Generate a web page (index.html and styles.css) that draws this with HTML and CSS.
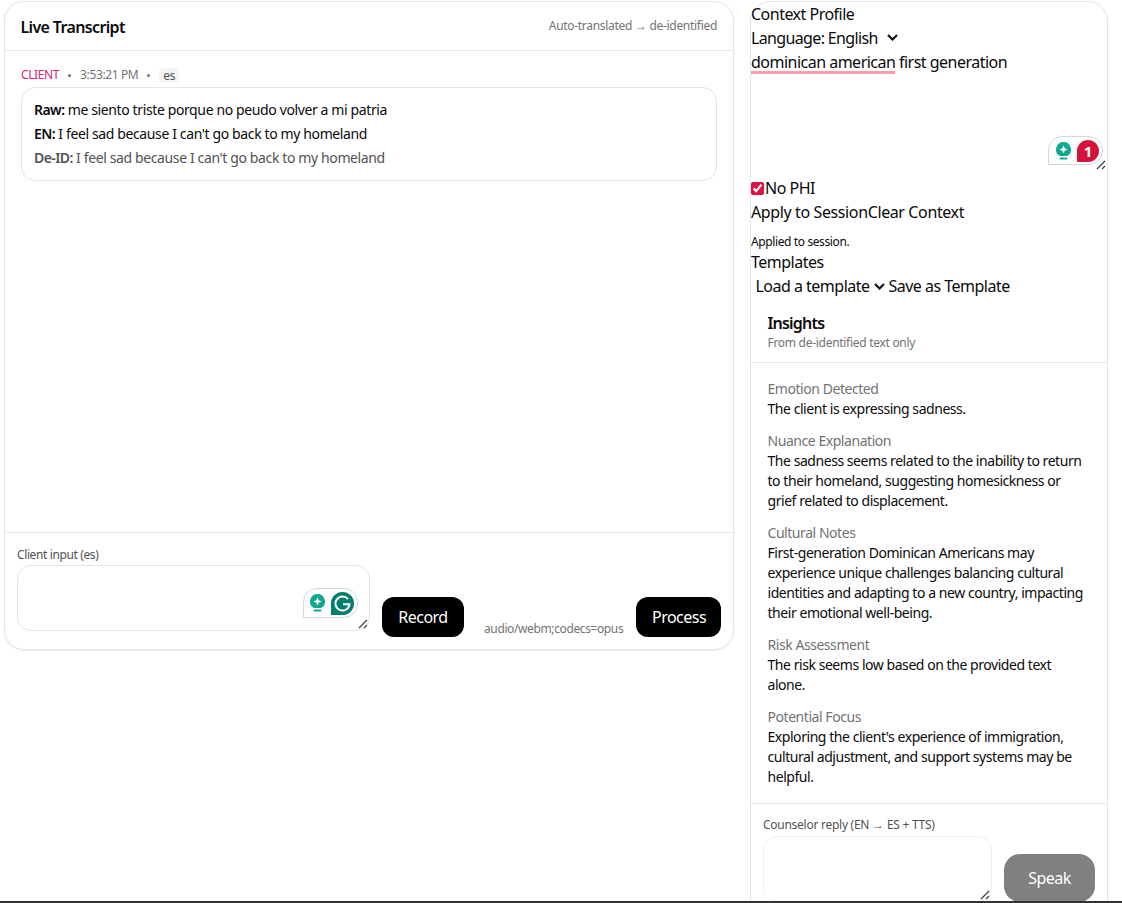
FILE: index.html
```html
<!DOCTYPE html>
<html lang="en">
<head>
<meta charset="utf-8">
<title>Live Transcript</title>
<link rel="stylesheet" href="styles.css">
</head>
<body>
<div class="page">
  <main class="columns">
    <section class="card transcript">
      <header class="card-head">
        <h2>Live Transcript</h2>
        <span class="head-note">Auto-translated <span class="arrow">→</span> de-identified</span>
      </header>
      <div class="messages">
        <div class="meta">
          <span class="who">CLIENT</span><i class="dot"></i><span>3:53:21 PM</span><i class="dot"></i><span class="lang">es</span>
        </div>
        <div class="bubble">
          <p><b>Raw:</b> me siento triste porque no peudo volver a mi patria</p>
          <p><b>EN:</b> I feel sad because I can't go back to my homeland</p>
          <p class="deid"><b>De-ID:</b> I feel sad because I can't go back to my homeland</p>
        </div>
      </div>
      <footer class="composer">
        <div class="field">
          <label class="small-label">Client input (es)</label>
          <div class="box client-box">
            <div class="gram">
              <svg class="bulb" viewBox="0 0 15 18"><path d="M7.500 0a7.500 7.500 0 0 1 3.500 14.100H4A7.500 7.500 0 0 1 7.500 0z" fill="#0fa98f"/><path d="M7.500 3.500 8.700 6.300l2.800 1.200-2.800 1.200-1.200 2.800-1.200-2.800-2.800-1.200 2.800-1.200z" fill="#fff"/><rect x="3.500" y="15.500" width="8" height="2" rx="1" fill="#0fa98f"/></svg>
              <svg class="g-badge" viewBox="0 0 23 23"><path d="M11.500 0a11.500 11.500 0 0 1 0 23H0V11.500A11.500 11.500 0 0 1 11.500 0z" fill="#027e6f"/><path d="M17 7.200a7 7 0 1 0 1.500 5H12" fill="none" stroke="#fff" stroke-width="2"/></svg>
            </div>
            <svg class="grip" viewBox="0 0 10 10"><path d="M9 1 1 9M9 6 6 9" stroke="#444" stroke-width="1.300"/></svg>
          </div>
        </div>
        <button class="btn rec">Record</button>
        <span class="codec">audio/webm;codecs=opus</span>
        <button class="btn proc">Process</button>
      </footer>
    </section>

    <aside class="card side">
      <div class="plain">Context Profile</div>
      <div class="plain select-line"><span class="tight">Language: English</span><svg class="chev lang-chev" viewBox="0 0 11 7"><path d="M1 1l4.500 4.500L10 1" fill="none" stroke="#111" stroke-width="2.200"/></svg></div>
      <div class="context-area"><span class="flag">dominican american</span> first generation<div class="gram red-gram">
          <svg class="bulb" viewBox="0 0 15 18"><path d="M7.500 0a7.500 7.500 0 0 1 3.500 14.100H4A7.500 7.500 0 0 1 7.500 0z" fill="#0fa98f"/><path d="M7.500 3.500 8.700 6.300l2.800 1.200-2.800 1.200-1.200 2.800-1.200-2.800-2.800-1.200 2.800-1.200z" fill="#fff"/><rect x="3.500" y="15.500" width="8" height="2" rx="1" fill="#0fa98f"/></svg>
          <span class="count">1</span>
        </div><svg class="grip" viewBox="0 0 10 10"><path d="M9 1 1 9M9 6 6 9" stroke="#444" stroke-width="1.300"/></svg></div>
      <label class="plain check-line"><input type="checkbox" checked>No PHI</label>
      <div class="plain loose">Apply to SessionClear Context</div>
      <div class="applied">Applied to session.</div>
      <div class="plain">Templates</div>
      <div class="plain template-line">Load a template<svg class="chev tpl-chev" viewBox="0 0 11 7"><path d="M1 1l4.500 4.500L10 1" fill="none" stroke="#111" stroke-width="2.200"/></svg>Save as Template</div>

      <div class="insights-head">
        <h2>Insights</h2>
        <div class="sub">From de-identified text only</div>
      </div>
      <div class="insights">
        <div class="item"><h3>Emotion Detected</h3><p>The client is expressing sadness.</p></div>
        <div class="item"><h3>Nuance Explanation</h3><p>The sadness seems related to the inability to return to their homeland, suggesting homesickness or grief related to displacement.</p></div>
        <div class="item"><h3>Cultural Notes</h3><p>First-generation Dominican Americans may experience unique challenges balancing cultural identities and adapting to a new country, impacting their emotional well-being.</p></div>
        <div class="item"><h3>Risk Assessment</h3><p>The risk seems low based on the provided text alone.</p></div>
        <div class="item"><h3>Potential Focus</h3><p>Exploring the client's experience of immigration, cultural adjustment, and support systems may be helpful.</p></div>
      </div>
      <div class="reply">
        <div class="reply-field">
          <label class="small-label reply-label">Counselor reply (EN <span class="arrow">→</span> ES + TTS)</label>
          <div class="box reply-box"><svg class="grip" viewBox="0 0 10 10"><path d="M9 1 1 9M9 6 6 9" stroke="#444" stroke-width="1.300"/></svg></div>
        </div>
        <button class="btn speak">Speak</button>
      </div>
    </aside>
  </main>
  <div class="edge"></div>
</div>
</body>
</html>
```
FILE: styles.css
```css
* { box-sizing: border-box; letter-spacing: -0.032em; }
html, body { margin: 0; height: 100%; overflow: hidden; background: #fff; }
body { font-family: "Noto Sans", "Open Sans", sans-serif; font-size: 16px; line-height: 24px; color: #0a0a0a; }
h2, h3, p { margin: 0; }
.page { height: 903px; display: flex; flex-direction: column; }
.columns { flex: 1; min-height: 0; display: flex; align-items: flex-start; gap: 16px; padding: 1px 15px 0 4px; overflow: hidden; }
.edge { height: 2px; background: #333; flex: none; }
.card { background: #fff; border: 1px solid #e5e5e5; border-radius: 20px; }
.arrow { font-family: "Liberation Sans", sans-serif; letter-spacing: 0; }

.transcript { width: 730px; height: 649px; flex: none; display: flex; flex-direction: column; box-shadow: 0 1px 2px rgba(0,0,0,.06); }
.card-head { height: 49px; flex: none; display: flex; align-items: center; justify-content: space-between; padding: 1px 16px 0 15.5px; border-bottom: 1px solid #e5e5e5; }
.card-head h2 { font-size: 16px; font-weight: 600; letter-spacing: -0.04em; }
.head-note { font-size: 12px; color: #737373; margin-top: -1px; }
.head-note, .head-note * { letter-spacing: -0.025em; }
.messages { flex: 1; padding: 14px 16px 0; }
.meta { display: flex; align-items: center; font-size: 12px; line-height: 20px; color: #737373; height: 20px; }
.who { color: #d6246e; }
.dot { width: 3px; height: 3px; border-radius: 50%; background: #737373; margin: 0 9px; }
.lang { background: #f5f5f5; border-radius: 4px; padding: 0 4px; line-height: 15px; color: #525252; }
.bubble { margin-top: 2px; border: 1px solid #e5e5e5; border-radius: 14px; padding: 10px 12px; font-size: 14px; line-height: 24px; }
.bubble p { letter-spacing: -0.027em; }
.bubble b { font-weight: 600; letter-spacing: -0.04em; }
.deid { color: #525252; }

.composer { height: 117px; flex: none; border-top: 1px solid #e5e5e5; padding: 12px; display: flex; align-items: flex-end; }
.field { width: 353px; margin: 0 12px 6px 0; flex: none; }
.small-label { display: block; font-size: 12px; line-height: 18px; color: #525252; margin-bottom: 1px; }
.reply-label { margin-bottom: 2px; letter-spacing: -0.022em; }
.box { position: relative; border: 1px solid #e5e5e5; border-radius: 14px; background: #fff; }
.client-box { height: 66px; border-color: #e2e2ea; }
.btn { border: 0; background: #000; color: #fff; font: inherit; border-radius: 12px; height: 40px; padding: 0 16px; cursor: pointer; }
.rec { width: 82px; flex: none; }
.proc { width: 85px; flex: none; }
.codec { font-size: 12px; line-height: 16px; color: #737373; margin: 0 12px 0 20px; flex: 1; white-space: nowrap; }

.gram { position: absolute; right: 11px; bottom: 12px; width: 55px; height: 30px; display: flex; align-items: center; justify-content: space-between; padding: 0 3px 0 6px; background: #fff; border: 1px solid #d5d5e2; border-radius: 14px 14px 14px 0; }
.bulb { width: 15px; height: 18px; flex: none; }
.g-badge { width: 23px; height: 23px; flex: none; }
.grip { position: absolute; right: 1px; bottom: 1px; width: 10px; height: 10px; }

.side { width: 358px; flex: none; height: 960px; display: flex; flex-direction: column; }
.plain { height: 24px; flex: none; white-space: nowrap; }
.loose { letter-spacing: -0.024em; }
.tight { letter-spacing: -0.04em; }
.select-line { display: flex; align-items: center; }
.chev { flex: none; }
.lang-chev { width: 11px; height: 7px; margin-left: 9px; margin-top: -1px; }
.context-area { position: relative; height: 126px; flex: none; white-space: pre-wrap; }
.flag { display: inline-block; height: 24px; border-bottom: 3px solid #ff9cae; line-height: 24px; }
.red-gram { right: 4px; bottom: 11px; width: 55px; height: 29px; padding: 0 3px 0 7px; white-space: normal; }
.count { width: 22px; height: 22px; background: #d6123c; color: #fff; font-weight: 700; font-size: 15px; line-height: 22px; text-align: center; border-radius: 50% 50% 50% 0; letter-spacing: 0; }
.context-area > .grip { right: 1px; bottom: 6px; }
.check-line { display: flex; align-items: center; }
.check-line input { margin: 0 1px 0 0; width: 13px; height: 13px; accent-color: #e0123f; }
.applied { flex: none; font-size: 12px; line-height: 17px; padding-top: 9px; height: 26px; }
.template-line { display: flex; align-items: center; padding-left: 4.5px; }
.tpl-chev { width: 11px; height: 7px; margin: 0 4px; }

.insights-head { padding: 13px 17px 0 16.5px; height: 65px; flex: none; border-bottom: 1px solid #e5e5e5; }
.insights-head h2 { font-size: 16px; font-weight: 600; line-height: 24px; letter-spacing: -0.05em; }
.sub { font-size: 12px; line-height: 16px; color: #737373; letter-spacing: -0.024em; }
.insights { padding: 16px 16px 0 16.5px; height: 441px; flex: none; border-bottom: 1px solid #e5e5e5; }
.item { margin-bottom: 12px; font-size: 14px; line-height: 20px; }
.item h3 { font-size: 14px; font-weight: 400; color: #737373; line-height: 20px; }
.reply { display: flex; align-items: flex-end; padding: 12px 12px 0; gap: 12px; }
.reply-field { width: 229px; flex: none; }
.reply-box { height: 66px; border-color: #eee; }
.speak { background: #808080; width: 91px; height: 48px; border-radius: 16px; }
```
